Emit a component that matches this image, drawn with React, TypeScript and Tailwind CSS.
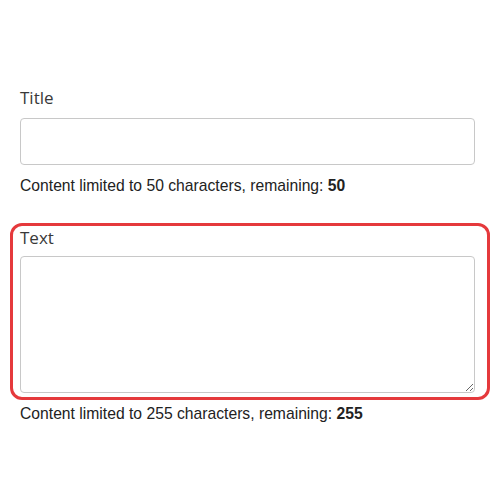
import React from "react";

export default function App() {
  return (
    <div className="w-[500px] h-[500px] bg-white px-[20px] pt-[86px]">
      <div className="flex flex-col">
        <label className="block h-[24px] text-[17px] leading-[24px] text-[#393939] font-['Open_Sans',sans-serif]">Title</label>
        <input
          type="text"
          className="mt-[8px] h-[47px] w-[455px] rounded-[4px] border border-[#c8c8c8] bg-white outline-none"
        />
        <p className="mt-[11px] text-[15.7px] leading-[20px] text-[#222] font-['Liberation_Sans',Arial,sans-serif]">
          Content limited to 50 characters, remaining: <b>50</b>
        </p>
      </div>
      <div className="-mx-[10px] mt-[27px] rounded-[12px] border-[3px] border-[#e5393c] px-[7px] pb-[4px]">
        <label className="block h-[24px] text-[17px] leading-[24px] text-[#393939] font-['Open_Sans',sans-serif]">Text</label>
        <textarea className="mt-[6px] block h-[137px] w-[455px] rounded-[4px] border border-[#c8c8c8] bg-white outline-none" />
      </div>
      <p className="mt-[4px] text-[15.7px] leading-[20px] text-[#222] font-['Liberation_Sans',Arial,sans-serif]">
        Content limited to 255 characters, remaining: <b>255</b>
      </p>
    </div>
  );
}
